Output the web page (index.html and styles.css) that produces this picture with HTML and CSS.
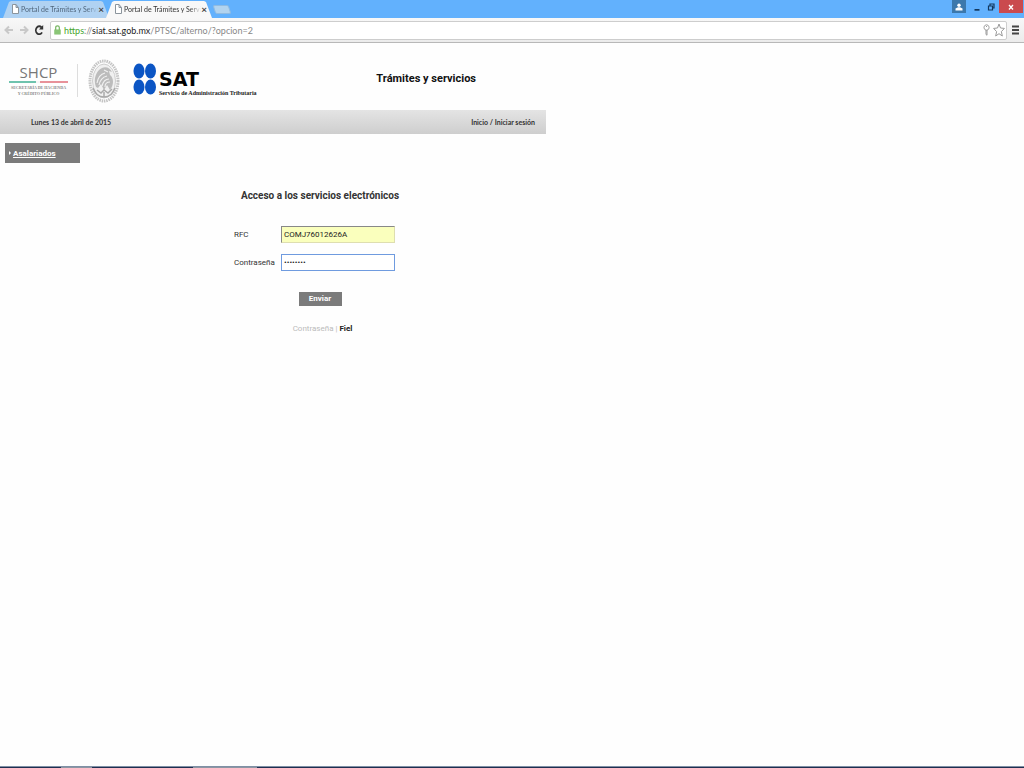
FILE: index.html
```
<!DOCTYPE html>
<html lang="es">
  <head>
    <meta charset="UTF-8" />
    <meta name="viewport" content="width=device-width, initial-scale=1.0" />
    <title>Portal de Trámites y Servicios</title>
    <link rel="stylesheet" href="styles.css">
  </head>
  <body>
    <div class="browser">
      <div class="tab-strip">
        <div class="tab">
          <svg class="page-icon" viewBox="0 0 7 10"><path d="M.5.5h3.5l2.500 3v6H.5zM4 .5v3h2.500" /></svg>
          <span class="tab-title">Portal de Trámites y Servi</span>
          <button class="tab-close" aria-label="Cerrar">×</button>
        </div>
        <div class="tab active">
          <svg class="page-icon" viewBox="0 0 7 10"><path d="M.5.5h3.5l2.500 3v6H.5zM4 .5v3h2.500" /></svg>
          <span class="tab-title">Portal de Trámites y Servi</span>
          <button class="tab-close" aria-label="Cerrar">×</button>
        </div>
        <button class="new-tab" aria-label="Nueva pestaña"></button>
        <div class="window-buttons">
          <button class="win user" aria-label="Usuario">
            <svg viewBox="0 0 8 8"><circle cx="4" cy="2.200" r="1.700" fill="#fff" /><path d="M.5 7.500V5.500L3 4.300h2l2.500 1.200v2z" fill="#fff" /></svg>
          </button>
          <button class="win" aria-label="Minimizar">
            <svg viewBox="0 0 8 8"><path d="M1.500 6h5v1.700h-5z" fill="#12385f" /></svg>
          </button>
          <button class="win" aria-label="Restaurar">
            <svg viewBox="0 0 8 8"><path d="M3 2.500V1h4v4H5.500M1.500 3h4v4h-4z" fill="none" stroke="#12385f" stroke-width="1.200" /></svg>
          </button>
          <button class="win close" aria-label="Cerrar ventana">
            <svg viewBox="0 0 8 8"><path d="M2 2l4 4.500M6 2L2 6.500" stroke="#fff" stroke-width="1.300" /></svg>
          </button>
        </div>
      </div>

      <div class="toolbar">
        <button class="nav" aria-label="Atrás">
          <svg viewBox="0 0 10 10"><path d="M9 5H1.500M5 1.500L1.500 5 5 8.500" stroke="#c8c8c8" /></svg>
        </button>
        <button class="nav" aria-label="Adelante">
          <svg viewBox="0 0 10 10"><path d="M1 5h7.500M5 1.500L8.500 5 5 8.500" stroke="#c8c8c8" /></svg>
        </button>
        <button class="nav" aria-label="Recargar">
          <svg viewBox="0 0 10 10"><path d="M7.500 2.400A3.300 4 0 1 0 8 7.300" stroke="#333" stroke-width="1.800" /><path d="M9.200 0v4.500H5z" fill="#333" stroke="none" /></svg>
        </button>
        <div class="address">
          <svg class="lock" viewBox="0 0 7 10"><path d="M1.700 5V2.600Q1.700.8 3.500.8T5.300 2.600V5" fill="none" stroke="#75b560" stroke-width="1.200" /><path d="M.3 4.500h6.400v5H.3z" fill="#7dbd67" /><path d="M1 6h5M1 8h5" stroke="#a5d593" stroke-width=".7" /></svg>
          <div class="url"><span class="secure">https</span>://<span class="host">siat.sat.gob.mx</span>/PTSC/alterno/?opcion=2</div>
          <svg class="key" viewBox="0 0 7 12"><path d="M3.500.8a2.500 2.700 0 1 0 .1 0M3 6v4.500l1 .7V6M3 2.500h1" /></svg>
          <svg class="star" viewBox="0 0 12 14"><path d="M6 1l1.500 4 3.900.4-3 3.200.9 4.400L6 10.700 2.700 13l.9-4.400-3-3.200L4.500 5z" /></svg>
        </div>
        <button class="menu" aria-label="Menú">
          <svg viewBox="0 0 8 10"><path d="M0 1.500h7M0 5h7M0 8.500h7" stroke="#444" stroke-width="2" /></svg>
        </button>
      </div>
    </div>

    <div class="portal">
      <header class="header">
        <div class="shcp">
          <div class="shcp-name">SHCP</div>
          <div class="shcp-line"></div>
          <div class="shcp-text">SECRETARÍA DE HACIENDA<br>Y CRÉDITO PÚBLICO</div>
        </div>
        <svg class="seal" viewBox="0 0 32 44">
          <ellipse cx="16" cy="22" rx="14" ry="20" fill="none" stroke="#c4c4c4" stroke-width="3" stroke-dasharray="1.500 .8" />
          <ellipse cx="16" cy="22" rx="11.500" ry="17" fill="#f0f0f0" stroke="#bbb" stroke-width=".7" />
          <path d="M8 28C5 20 8 12 14 9c4-2 8 0 10 4l-3-1 1 4c4 3 4 10 0 15l-3-5-3 5-3-6-3 4z" fill="#bcbcbc" />
          <path d="M9 24c1-6 4-9 8-10M11 26c1-5 4-8 8-9M14 27c1-4 3-7 7-7M17 28c0-3 2-5 5-5M16 11l4 2" fill="none" stroke="#f1f1f1" stroke-width="1.100" />
          <path d="M5 29c2 6 6 9 11 9s9-3 11-9M9 31l4 3 3-3 4 3 4-4M16 33v5" fill="none" stroke="#aaa" stroke-width="1.500" />
        </svg>
        <div class="sat">
          <svg class="sat-dots" viewBox="0 0 24 32">
            <g fill="#0b55c4"><ellipse cx="6" cy="8" rx="5.500" ry="7.500" /><ellipse cx="17.500" cy="8" rx="5.500" ry="7.500" /><ellipse cx="6" cy="24" rx="5.500" ry="7.500" /><ellipse cx="17.500" cy="24" rx="5.500" ry="7.500" /></g>
          </svg>
          <div class="sat-words">
            <div class="sat-name">SAT</div>
            <div class="sat-text">Servicio de Administración Tributaria</div>
          </div>
        </div>
        <h1>Trámites y servicios</h1>
      </header>

      <div class="bar">
        <span>Lunes 13 de abril de 2015</span>
        <nav><a href="#">Inicio</a> / <a href="#">Iniciar sesión</a></nav>
      </div>

      <a class="side-link" href="#"><span>Asalariados</span></a>

      <form class="login">
        <h2>Acceso a los servicios electrónicos</h2>
        <div class="field">
          <label for="rfc">RFC</label>
          <input id="rfc" class="filled" type="text" value="COMJ76012626A">
        </div>
        <div class="field">
          <label for="password">Contraseña</label>
          <input id="password" class="focused" type="password" value="12345678">
        </div>
        <button class="submit" type="button">Enviar</button>
        <div class="options"><span>Contraseña |</span> <a href="#">Fiel</a></div>
      </form>
    </div>

    <div class="taskbar">
      <div class="task first"></div>
      <div class="task second"></div>
    </div>
  </body>
</html>
```
FILE: styles.css
```
* {
    box-sizing: border-box;
    margin: 0;
    padding: 0;
}

body {
    display: flex;
    flex-direction: column;
    min-height: 100vh;
    background: #fefefe;
    color: #333;
    font-family: Roboto, "Liberation Sans", Arial, sans-serif;
    font-size: 10px;
}

button {
    border: none;
    background: none;
    font-family: inherit;
}

svg {
    display: block;
    flex: none;
}

a {
    color: inherit;
    text-decoration: none;
}

/* Browser window */
.tab-strip {
    display: flex;
    height: 18px;
    padding-left: 3px;
    background: #62b1fd;
}

.tab {
    position: relative;
    z-index: 0;
    display: flex;
    align-items: center;
    width: 106px;
    padding: 0 5px 0 9px;
    color: #50667c;
    font-family: Lato, sans-serif;
    font-size: 7px;
}

.tab + .tab {
    margin-left: -3px;
}

.tab::before {
    content: "";
    position: absolute;
    z-index: -1;
    inset: 1px 0 0;
    background: #b0d2f2;
    clip-path: polygon(0 100%, 6px 6%, 8px 0, calc(100% - 8px) 0, calc(100% - 6px) 6%, 100% 100%);
}

.tab.active {
    color: #333;
}

.tab.active::before {
    background: #f8f8f8;
}

.page-icon {
    width: 7px;
    height: 10px;
    margin-right: 2px;
    fill: #fff;
    stroke: #8b949c;
    stroke-width: 1;
}

.tab-title {
    flex: 1;
    white-space: nowrap;
    mask-image: linear-gradient(to right, #000 85%, transparent);
}

.tab-close {
    width: 9px;
    color: #444;
    font-size: 10px;
    font-weight: bold;
    line-height: 12px;
}

.new-tab {
    width: 16px;
    height: 9px;
    margin: 5px 0 0 2px;
    background: #b1d3ef;
    border: 1px solid #8fbbe2;
    border-radius: 2px;
    transform: skewX(18deg);
}

.window-buttons {
    display: flex;
    align-items: flex-start;
    margin-left: auto;
    padding-right: 1px;
}

.win {
    display: flex;
    align-items: center;
    justify-content: center;
    width: 14px;
    height: 13px;
}

.win svg {
    width: 8px;
    height: 8px;
}

.win.user {
    margin-right: 4px;
    background: #3c78ac;
}

.win.close {
    width: 24px;
    margin-left: 1px;
    background: #ca4a4e;
}

.toolbar {
    display: flex;
    align-items: center;
    height: 25px;
    padding: 0 4px;
    background: linear-gradient(#f8f8f8, #ececec);
    border-bottom: 1px solid #b8b8b8;
}

.nav {
    width: 15px;
}

.nav svg {
    width: 10px;
    height: 10px;
    fill: none;
    stroke-width: 2;
}

.address {
    display: flex;
    flex: 1;
    align-items: center;
    height: 19px;
    margin-left: 1px;
    padding: 0 1px 0 3px;
    background: #fff;
    border: 1px solid #cdcdcd;
    border-radius: 2px;
}

.lock {
    width: 7px;
    height: 10px;
    margin-right: 3px;
}

.url {
    flex: 1;
    color: #888;
    font-family: Lato, sans-serif;
    font-size: 9px;
}

.secure {
    color: #45a52c;
}

.host {
    color: #222;
}

.key {
    width: 7px;
    height: 12px;
    margin-right: 3px;
}

.star {
    width: 12px;
    height: 14px;
}

.key,
.star {
    fill: none;
    stroke: #999;
}

.menu {
    margin-left: 5px;
}

.menu svg {
    width: 8px;
    height: 10px;
}

/* Page */
.portal {
    flex: 1;
    width: 100%;
    max-width: 546px;
}

.header {
    display: flex;
    align-items: center;
    height: 67px;
    padding: 8px 70px 0 9px;
}

.shcp {
    width: 69px;
    padding-right: 9px;
    border-right: 1px solid #ddd;
    color: #888;
    font-family: "Liberation Serif", serif;
    text-align: center;
}

.shcp-name {
    color: #777;
    font-family: "Open Sans", sans-serif;
    font-size: 15px;
    line-height: 17px;
}

.shcp-line {
    height: 2px;
    margin-bottom: 2px;
    background: linear-gradient(to right, #6fc3ae 45%, #f6f6f6 45%, #f6f6f6 53%, #e8929a 53%);
}

.shcp-text {
    font-size: 4px;
    font-weight: bold;
    line-height: 6px;
    white-space: nowrap;
}

.seal {
    width: 32px;
    height: 44px;
    margin: 0 13px 0 10px;
}

.sat {
    display: flex;
    align-items: flex-start;
}

.sat-dots {
    width: 24px;
    height: 32px;
    margin-right: 2px;
}

.sat-words {
    padding-top: 7px;
    color: #222;
}

.sat-name {
    color: #000;
    font-family: "DejaVu Sans", sans-serif;
    font-size: 19px;
    font-weight: bold;
    line-height: 19px;
}

.sat-text {
    font-family: "Liberation Serif", serif;
    font-size: 6px;
    font-weight: bold;
    line-height: 9px;
    white-space: nowrap;
}

h1 {
    margin: 0 0 4px auto;
    color: #111;
    font-size: 11px;
    line-height: 16px;
    white-space: nowrap;
}

.bar {
    display: flex;
    align-items: center;
    justify-content: space-between;
    height: 24px;
    padding: 0 11px 1px 31px;
    background: linear-gradient(#e4e4e4, #cecece);
    font-family: Lato, sans-serif;
    font-size: 7px;
    font-weight: bold;
    line-height: 8px;
}

.side-link {
    display: flex;
    align-items: center;
    width: 75px;
    height: 20px;
    margin: 9px 0 0 5px;
    padding-left: 4px;
    background: #7b7b7b;
    color: #fff;
    font-size: 8px;
    font-weight: bold;
}

.side-link span {
    text-decoration: underline;
}

.side-link::before {
    content: "";
    margin-right: 2px;
    border: 2px solid transparent;
    border-left-color: #fff;
    border-right: none;
}

.login {
    display: flex;
    flex-direction: column;
    align-items: center;
    width: 174px;
    margin: 25px 0 0 233px;
}

h2 {
    margin-bottom: 22px;
    font-size: 10px;
    line-height: 16px;
    white-space: nowrap;
}

.field {
    display: flex;
    align-items: center;
    width: 100%;
    height: 17px;
    margin-bottom: 11px;
    padding-left: 1px;
}

.field label {
    width: 47px;
    font-size: 8px;
}

.field input {
    width: 114px;
    height: 17px;
    padding: 0 2px;
    color: #222;
    font-family: inherit;
    font-size: 8px;
    outline: none;
}

.filled {
    background: #faffbd;
    border: 1px solid #dedeb0;
    border-top-color: #888;
    border-left-color: #888;
}

.focused {
    background: #fff;
    border: 1px solid #6f9bdf;
}

.submit {
    width: 43px;
    height: 14px;
    margin-top: 10px;
    background: #7b7b7b;
    color: #fff;
    font-size: 8px;
    font-weight: bold;
    line-height: 14px;
}

.options {
    margin: 17px 0 0 5px;
    color: #bbb;
    font-size: 8px;
    line-height: 12px;
}

.options a {
    color: #222;
    font-weight: bold;
}

.taskbar {
    display: flex;
    height: 2px;
    background: #1f2f50;
    border-top: 1px solid #8090a5;
}

.task {
    height: 1px;
    background: #8d96a3;
}

.first {
    width: 31px;
    margin-left: 61px;
}

.second {
    width: 64px;
    margin-left: 101px;
}
```
